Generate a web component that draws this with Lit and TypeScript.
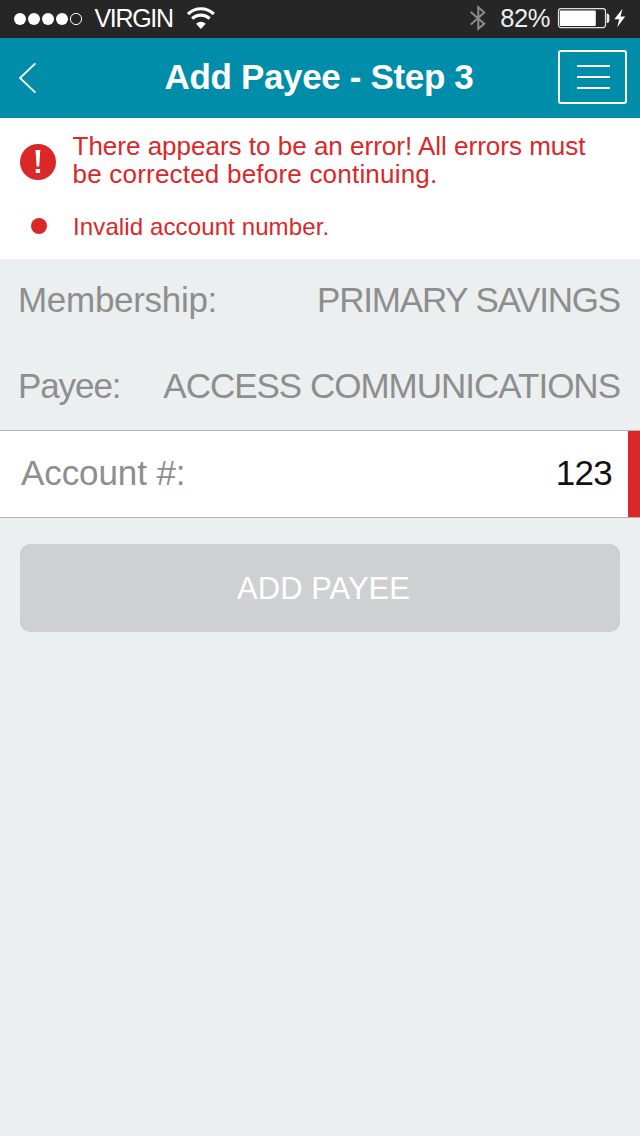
import { LitElement, html, css } from "lit";
import { customElement, state } from "lit/decorators.js";

@customElement("status-bar")
class StatusBar extends LitElement {
  static styles = css`
    :host { display: flex; height: 38px; background: #262626; color: #fff; align-items: center; }
    svg { display: block; flex: none; }
    .dots { margin-left: 14px; }
    .carrier { font-size: 25px; letter-spacing: -1.3px; line-height: 37px; height: 38px; margin-left: 11.4px; width: 79px; }
    .wifi { margin-left: 13.8px; }
    .bt { margin-left: auto; }
    .pct { font-size: 25.5px; letter-spacing: -0.4px; line-height: 36px; height: 38px; margin-left: 14px; color: #eee; }
    .battery { margin-left: 7px; margin-right: 11px; }
  `;
  render() {
    return html`
      <svg class="dots" width="69" height="38" fill="#fff">
        <circle cx="6" cy="19" r="6" /><circle cx="20" cy="19" r="6" />
        <circle cx="34" cy="19" r="6" /><circle cx="48" cy="19" r="6" />
        <circle cx="62" cy="19" r="5.6" fill="none" stroke="#fff" stroke-width="1" />
      </svg>
      <span class="carrier">VIRGIN</span>
      <svg class="wifi" width="29" height="38" fill="none" stroke="#fff" stroke-width="3.2">
        <path d="M1 14 A18.5 18.5 0 0 1 26.8 14" />
        <path d="M5.2 18.7 A12.3 12.3 0 0 1 22.6 18.7" />
        <path d="M9 23.8 Q13.9 19.8 18.8 23.8 L13.9 29Z" fill="#fff" stroke="none" />
      </svg>
      <svg class="bt" width="16" height="38" fill="none" stroke="#8c8c8c" stroke-width="2">
        <path d="M0.8 12 L14.2 23.8 L8.3 28.8 V7.2 L14.2 12.4 L0.8 24.5" />
      </svg>
      <span class="pct">82%</span>
      <svg class="battery" width="72" height="38">
        <rect x="1.5" y="8.6" width="47" height="19" rx="2.5" fill="none" stroke="#e0e0e0" stroke-width="1.2" />
        <rect x="2.8" y="10.5" width="36" height="15.5" rx="1" fill="#fff" />
        <path d="M49.7 13.5 Q52.3 13.5 52.3 16 V20.5 Q52.3 23 49.7 23Z" fill="#eee" />
        <path d="M65.5 8.8 L57.3 19.2 H62.3 L60.2 27.2 L68.2 16.4 H63.5Z" fill="#fff" />
      </svg>
    `;
  }
}

@customElement("nav-header")
class NavHeader extends LitElement {
  static styles = css`
    :host { display: grid; grid-template-columns: 82px 1fr 82px; height: 80px; background: #008daa; color: #fff; align-items: center; }
    svg { display: block; }
    .back { margin-left: 18px; }
    h1 { margin: 0; padding-right: 2px; text-align: center; font-size: 35px; letter-spacing: -0.35px; line-height: 78px; height: 80px; font-weight: 700; white-space: nowrap; }
    .menu-wrap { height: 54px; margin-bottom: 2px; }
    .menu { box-sizing: border-box; width: 69px; height: 54px; border: 2px solid #fff; border-radius: 3px; display: flex; flex-direction: column; align-items: center; justify-content: center; gap: 9px; padding-left: 1px; }
    .menu span { width: 33px; height: 2px; background: #fff; }
  `;
  render() {
    return html`
      <svg class="back" width="20" height="32" fill="none" stroke="#fff" stroke-width="1.8">
        <path d="M17.4 1.3 L2 16 L17.4 30.7" />
      </svg>
      <h1>Add Payee - Step 3</h1>
      <div class="menu-wrap"><div class="menu"><span></span><span></span><span></span></div></div>
    `;
  }
}

@customElement("app-root")
class AppRoot extends LitElement {
  static styles = css`
    :host { display: block; min-height: 1136px; background: #ebeff0; font-family: "Liberation Sans", Arial, sans-serif; color: #8e8e8e; }
    .errors { box-sizing: border-box; height: 141px; background: #fff; color: #db2728; display: grid; grid-template-columns: 72px 1fr; align-content: start; padding-top: 14px; }
    .alert { display: block; margin: 12px 0 0 20px; }
    .message { margin: 0 0 0 0.5px; font-size: 26px; line-height: 28px; white-space: nowrap; }
    .second { letter-spacing: 0.21px; }
    .bullet { width: 16px; height: 16px; border-radius: 50%; background: #db2728; margin: 30px 0 0 31px; }
    .detail { margin: 25px 0 0 1px; font-size: 24px; letter-spacing: 0.12px; line-height: 28px; white-space: nowrap; }
    .row { box-sizing: border-box; display: flex; justify-content: space-between; padding: 0 20px 0 18px; height: 86px; font-size: 35px; line-height: 82px; white-space: nowrap; }
    .row + .row { height: 85px; }
    .l1 { letter-spacing: -0.3px; }
    .l2 { letter-spacing: -1.1px; }
    .v1 { letter-spacing: -1.2px; }
    .v2 { letter-spacing: -1px; }
    .field { box-sizing: border-box; display: flex; justify-content: space-between; height: 88px; background: #fff; border: solid #b4b5b6; border-width: 1px 0; font-size: 35px; line-height: 84px; padding-left: 21px; }
    .value { color: #111; border-right: 12px solid #db2728; padding-right: 16px; letter-spacing: -0.7px; }
    .l3 { letter-spacing: -0.1px; }
    .submit { display: block; box-sizing: border-box; width: 600px; height: 88px; margin: 26px 20px 0; padding: 2px 0 0 7px; border: 0; border-radius: 10px; background: #cfd0d2; color: #fff; font: 31px/86px "Liberation Sans", Arial, sans-serif; text-align: center; }
  `;
  @state() account = "123";
  render() {
    return html`
      <status-bar></status-bar>
      <nav-header></nav-header>
      <section class="errors">
        <svg class="alert" width="36" height="36">
          <circle cx="18" cy="18" r="18" fill="#db2728" />
          <path d="M15.5 6 H20.3 L19.2 22.5 H16.6Z M15.7 25 H20.1 V29 H15.7Z" fill="#fff" />
        </svg>
        <p class="message">There appears to be an error! All errors must<br /><span class="second">be corrected before continuing.</span></p>
        <div class="bullet"></div>
        <div class="detail">Invalid account number.</div>
      </section>
      <div class="row"><span class="l1">Membership:</span><span class="v1">PRIMARY SAVINGS</span></div>
      <div class="row"><span class="l2">Payee:</span><span class="v2">ACCESS COMMUNICATIONS</span></div>
      <div class="field"><span class="l3">Account #:</span><span class="value">${this.account}</span></div>
      <button class="submit">ADD PAYEE</button>
    `;
  }
}
